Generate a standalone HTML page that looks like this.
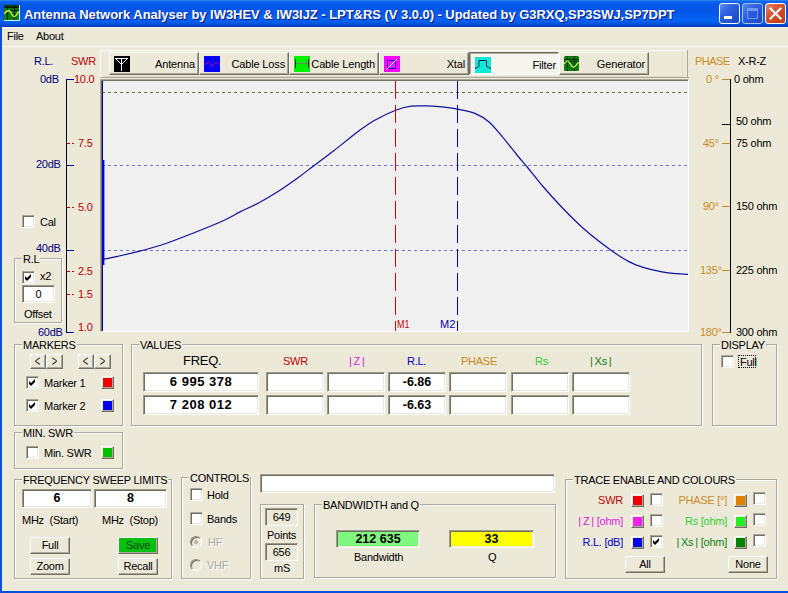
<!DOCTYPE html>
<html><head><meta charset="utf-8"><title>Antenna Network Analyser</title>
<style>
*{box-sizing:border-box;margin:0;padding:0}
html,body{width:788px;height:593px;overflow:hidden;background:#ECE9D8}
body{position:relative;font-family:"Liberation Sans",sans-serif;font-size:11px;color:#000;line-height:1}
.a{position:absolute;white-space:nowrap}
.t{position:absolute;white-space:nowrap;line-height:12px;height:12px;letter-spacing:-0.25px}
#title{left:0;top:0;width:788px;height:27px;background:linear-gradient(to bottom,#3088F2 0px,#1068EE 1.5px,#0558E6 4px,#0355E5 9px,#0458EA 14px,#0663F2 19px,#055EEC 22px,#034FD8 24.5px,#0039BE 27px)}
#ttext{left:24px;top:7px;font-size:13px;font-weight:bold;color:#fff;line-height:16px;text-shadow:1px 1px 0 #0A1883;letter-spacing:-0.045px}
.grp{position:absolute;border:1px solid #ACA899;box-shadow:1px 1px 0 #fff,inset 1px 1px 0 #fff}
.lg{position:absolute;background:#ECE9D8;white-space:nowrap;line-height:12px;height:12px;padding:0 1px;letter-spacing:-0.25px}
.btn{position:absolute;background:#ECE9D8;border:1px solid;border-color:#fff #716F64 #716F64 #fff;box-shadow:inset -1px -1px 0 #ACA899;text-align:center;white-space:nowrap;line-height:12px;letter-spacing:-0.25px}
.cb{position:absolute;width:13px;height:13px;background:#fff;border:1px solid;border-color:#ACA899 #fff #fff #ACA899;box-shadow:inset 1px 1px 0 #716F64,inset -1px -1px 0 #ECE9D8}
.tb{position:absolute;background:#fff;border:1px solid;border-color:#9C9988 #fff #fff #9C9988;box-shadow:inset 1px 1px 0 #716F64,inset -1px -1px 0 #ECE9D8;text-align:center;white-space:nowrap;line-height:12px;letter-spacing:-0.25px}
.sw{position:absolute;width:13px;height:13px;border:1px solid;border-color:#fff #716F64 #716F64 #fff;box-shadow:inset -1px -1px 0 #ACA899,inset 1px 1px 0 #ECE9D8}
.tbtn{position:absolute;top:52px;width:90px;height:23px;border:1px solid;border-color:#fff #716F64 #716F64 #fff;box-shadow:inset -1px -1px 0 #ACA899}
.tbtn.on{border-color:#716F64 #fff #fff #716F64;box-shadow:inset 1px 1px 0 #ACA899;background:#F6F5EE}
</style></head><body>
<div id="title" class="a"></div>
<svg class="a" style="left:4px;top:5px" width="16" height="16" viewBox="0 0 16 16"><rect width="16" height="16" fill="#0B7C0B"/><rect width="16" height="2" fill="#054005"/><path d="M3.500 0V15M10.500 0V15M0 2.500H15M6 5.500H15" stroke="#021802"/><path d="M15.500 0V16M0 15.500H16" stroke="#C8FFF0"/><path d="M0 9C1 7.500 2 6 4.500 5.500C6.500 5.500 7.500 9 8.500 10.500C9.500 12 11.500 11.500 12.500 10S14 7.500 14.500 6.500" fill="none" stroke="#D8FF40" stroke-width="1.300"/></svg>
<div id="ttext" class="a">Antenna Network Analyser by IW3HEV &amp; IW3IJZ - LPT&amp;RS (V 3.0.0) - Updated by G3RXQ,SP3SWJ,SP7DPT</div>
<div class="a" style="left:719px;top:3px;width:21px;height:21px;border:1px solid #fff;border-radius:3px;background:linear-gradient(135deg,#5B8BF0 0%,#2A5FE0 40%,#1F47C0 100%)">
<div class="a" style="left:4px;top:12px;width:8px;height:3px;background:#fff"></div>
</div>
<div class="a" style="left:742px;top:3px;width:21px;height:21px;border:1px solid #A9BEF5;border-radius:3px;background:linear-gradient(135deg,#5B8BF0 0%,#2A5FE0 40%,#1F47C0 100%)">
<div class="a" style="left:4px;top:4px;width:11px;height:11px;border:1px solid #7B9CF0;border-top-width:3px;opacity:.9"></div>
</div>
<div class="a" style="left:765px;top:3px;width:21px;height:21px;border:1px solid #fff;border-radius:3px;background:linear-gradient(135deg,#E9876B 0%,#D6532E 40%,#C03A12 100%)">
<svg class="a" style="left:0;top:0" width="19" height="19" viewBox="0 0 19 19"><path d="M4.500 4.500l10 10M14.500 4.500l-10 10" stroke="#fff" stroke-width="2.200" stroke-linecap="square"/></svg>
</div>
<div class="a" style="left:0px;top:27px;width:788px;height:1px;background:#F6F5EE;"></div>
<div class="a" style="left:0px;top:27px;width:2px;height:566px;background:#0A4FDC;"></div>
<div class="a" style="left:0px;top:591px;width:788px;height:2px;background:#0A4FDC;"></div>
<div class="t" style="left:7px;top:30px;">File</div>
<div class="t" style="left:36px;top:30px;">About</div>
<div class="a" style="left:2px;top:46px;width:786px;height:1px;background:#fff;"></div>
<div class="t" style="left:34px;top:55px;color:#000080;">R.L.</div>
<div class="t" style="left:71px;top:55px;color:#C00000;">SWR</div>
<div class="t" style="left:40px;top:73px;color:#000080;">0dB</div>
<div class="t" style="left:36px;top:158px;color:#000080;">20dB</div>
<div class="t" style="left:36px;top:242px;color:#000080;">40dB</div>
<div class="t" style="left:38px;top:326px;color:#000080;">60dB</div>
<div class="a" style="left:66px;top:79px;width:1px;height:254px;background:#000;"></div>
<div class="a" style="left:66px;top:79px;width:8px;height:1px;background:#000080;"></div>
<div class="a" style="left:66px;top:165px;width:8px;height:1px;background:#000080;"></div>
<div class="a" style="left:66px;top:250px;width:8px;height:1px;background:#000080;"></div>
<div class="a" style="left:66px;top:332px;width:8px;height:1px;background:#000080;"></div>
<div class="t" style="left:74px;top:73px;color:#C00000;">10.0</div>
<div class="a" style="left:67px;top:143px;width:3px;height:1px;background:#C00000"></div><div class="a" style="left:72px;top:143px;width:2px;height:1px;background:#C00000"></div>
<div class="t" style="left:78px;top:137px;color:#C00000;">7.5</div>
<div class="a" style="left:67px;top:207px;width:3px;height:1px;background:#C00000"></div><div class="a" style="left:72px;top:207px;width:2px;height:1px;background:#C00000"></div>
<div class="t" style="left:78px;top:201px;color:#C00000;">5.0</div>
<div class="a" style="left:67px;top:271px;width:3px;height:1px;background:#C00000"></div><div class="a" style="left:72px;top:271px;width:2px;height:1px;background:#C00000"></div>
<div class="t" style="left:78px;top:265px;color:#C00000;">2.5</div>
<div class="a" style="left:67px;top:294px;width:3px;height:1px;background:#C00000"></div><div class="a" style="left:72px;top:294px;width:2px;height:1px;background:#C00000"></div>
<div class="t" style="left:78px;top:288px;color:#C00000;">1.5</div>
<div class="t" style="left:78px;top:321px;color:#C00000;">1.0</div>
<div class="cb" style="left:22px;top:215px"></div>
<div class="t" style="left:40px;top:216px;">Cal</div>
<div class="grp" style="left:14px;top:258px;width:48px;height:65px"></div>
<div class="lg" style="left:22px;top:253px">R.L</div>
<div class="cb" style="left:22px;top:271px"><svg width="13" height="13" viewBox="0 0 13 13" style="position:absolute;left:-1px;top:-1px"><path d="M3 5v3l2 2 4-4V3L5 7z" fill="#000"/></svg></div>
<div class="t" style="left:40px;top:270px;">x2</div>
<div class="tb" style="left:22px;top:285px;width:33px;height:18px;padding-top:2px;">0</div>
<div class="t" style="left:24px;top:308px;">Offset</div>
<div class="a" style="left:100px;top:50px;width:588px;height:1px;background:#fff;"></div>
<div class="a" style="left:100px;top:77px;width:589px;height:1px;background:#ACA899;"></div>
<div class="a" style="left:100px;top:50px;width:1px;height:27px;background:#fff;"></div>
<div class="a" style="left:687px;top:50px;width:1px;height:28px;background:#ACA899;"></div>
<div class="a" style="left:103px;top:76px;width:580px;height:1px;background:#DDD9CA;"></div>
<div class="a" style="left:682px;top:52px;width:1px;height:25px;background:#DDD9CA;"></div>
<div class="tbtn" style="left:109px"></div>
<svg class="a" style="left:114px;top:56px" width="16" height="16" viewBox="0 0 16 16"><rect width="16" height="16" fill="#000"/><path d="M1 2.500H14M1.500 2.500l6 6M13.500 2.500l-6 6M7.500 2V15" stroke="#fff" fill="none"/></svg>
<div class="t" style="left:128px;top:58px;width:67px;text-align:right;letter-spacing:-0.15px">Antenna</div>
<div class="tbtn" style="left:199px"></div>
<svg class="a" style="left:204px;top:56px" width="16" height="16" viewBox="0 0 16 16"><rect width="16" height="16" fill="#0000FF"/><path d="M1 8.500L4.500 6L8 10.500L12.500 6L15 8.500" stroke="#C01070" fill="none"/></svg>
<div class="t" style="left:218px;top:58px;width:67px;text-align:right;letter-spacing:-0.15px">Cable Loss</div>
<div class="tbtn" style="left:289px"></div>
<svg class="a" style="left:294px;top:56px" width="16" height="16" viewBox="0 0 16 16"><rect width="16" height="16" fill="#00F000"/><path d="M1.500 3V12M14.500 3V12" stroke="#002000" fill="none"/><path d="M2 7.500H14M11.500 5.500l2 2l-2 2" stroke="#708070" fill="none"/></svg>
<div class="t" style="left:308px;top:58px;width:67px;text-align:right;letter-spacing:-0.15px">Cable Length</div>
<div class="tbtn" style="left:379px"></div>
<svg class="a" style="left:384px;top:56px" width="16" height="16" viewBox="0 0 16 16"><rect width="16" height="16" fill="#FF00FF"/><rect x="3.500" y="4.500" width="8" height="8" fill="#E020FF" stroke="#3000D0"/><path d="M2.500 13.500L13 3" stroke="#fff"/></svg>
<div class="t" style="left:398px;top:58px;width:67px;text-align:right;letter-spacing:-0.15px">Xtal</div>
<div class="tbtn on" style="left:469px"></div>
<svg class="a" style="left:475px;top:57px" width="16" height="16" viewBox="0 0 16 16"><rect width="16" height="16" fill="#10E8D8"/><path d="M0 11.500L4 9.500V3.500H11.500V9.500L16 11.500" stroke="#002860" fill="none"/></svg>
<div class="t" style="left:489px;top:59px;width:67px;text-align:right;letter-spacing:-0.15px">Filter</div>
<div class="tbtn" style="left:559px"></div>
<svg class="a" style="left:564px;top:56px" width="16" height="16" viewBox="0 0 16 16"><rect width="15" height="15" rx="1.500" fill="#0B7A0B"/><path d="M3.500 0V15M10.500 0V15M0 3.500H15M0 5.500H15" stroke="#023A02"/><path d="M0 8C1.500 6 2.500 4.500 4 5S7 10.500 9 11S12.500 9 14.500 6" fill="none" stroke="#C8FF40" stroke-width="1.200"/></svg>
<div class="t" style="left:578px;top:58px;width:67px;text-align:right;letter-spacing:-0.15px">Generator</div>
<div class="a" style="left:100px;top:79px;width:589px;height:253px;background:#F0F0F0;border-left:1px solid #ACA899;border-top:1px solid #ACA899;border-right:1px solid #fff;border-bottom:1px solid #fff;box-shadow:inset 1px 1px 0 #716F64"></div>
<svg class="a" style="left:100px;top:79px" width="590" height="253" viewBox="0 0 590 253">
<path d="M2 13.500H588" stroke="#707038" stroke-dasharray="3 3" fill="none"/>
<path d="M2 86.500H588M2 171.500H588" stroke="#7474D4" stroke-dasharray="3 3" fill="none"/>
<path d="M2.500 2V252" stroke="#000090" fill="none"/>
<path d="M3.200 81V186" stroke="#0000E0" stroke-width="2.400" fill="none"/>
<path d="M2.0 180.6 C4.6 180.1 12.2 178.5 17.8 177.3 C23.4 176.1 28.1 175.1 35.5 173.2 C42.9 171.3 52.4 168.9 62.2 165.7 C72.0 162.4 83.7 157.8 94.1 153.7 C104.5 149.6 116.7 144.7 124.3 141.2 C132.0 137.7 134.3 135.8 140.0 132.9 C145.7 130.0 152.0 127.5 158.5 124.0 C165.0 120.5 172.1 116.3 178.8 112.0 C185.6 107.7 193.2 102.2 199.0 98.0 C204.8 93.8 207.8 91.3 213.6 86.9 C219.4 82.5 226.5 77.3 233.8 71.7 C241.1 66.0 250.8 58.0 257.5 53.0 C264.2 48.0 267.9 45.0 274.3 41.4 C280.7 37.8 289.4 33.6 295.6 31.2 C301.8 28.8 306.5 27.9 311.4 27.2 C316.3 26.5 319.9 26.8 325.0 26.9 C330.1 27.0 336.4 27.4 341.8 27.9 C347.2 28.5 352.0 29.1 357.6 30.2 C363.2 31.3 370.3 32.5 375.5 34.6 C380.7 36.7 384.6 39.2 389.0 43.0 C393.4 46.8 397.3 51.9 402.0 57.4 C406.7 62.9 412.7 70.7 417.0 76.0 C421.3 81.3 423.7 83.8 428.0 89.0 C432.3 94.2 437.4 101.0 443.0 107.5 C448.6 114.0 454.8 120.9 461.6 128.0 C468.4 135.1 475.9 142.9 484.0 150.0 C492.1 157.1 502.6 165.1 510.0 170.5 C517.4 175.9 522.9 179.4 528.4 182.4 C533.9 185.4 537.4 186.7 543.0 188.4 C548.6 190.1 556.4 191.8 562.0 192.8 C567.6 193.9 572.4 194.3 576.7 194.7 C581.0 195.1 586.1 195.3 588.0 195.4" stroke="#1010A0" stroke-width="1.200" fill="none"/>
<path d="M295.500 2V252" stroke="#D00000" stroke-dasharray="18 6" fill="none"/>
<path d="M357.500 2V252" stroke="#0000B0" stroke-dasharray="18 6" fill="none"/>
<text x="297" y="249" font-size="11" textLength="12.500" lengthAdjust="spacingAndGlyphs" fill="#D00000" font-family="Liberation Sans, sans-serif">M1</text>
<text x="340" y="249" font-size="11" fill="#0000B0" font-family="Liberation Sans, sans-serif">M2</text>
</svg>
<div class="t" style="left:695px;top:55px;color:#CC8A1E;letter-spacing:-0.55px">PHASE</div>
<div class="t" style="left:738px;top:55px;">X-R-Z</div>
<div class="a" style="left:730px;top:79px;width:1px;height:254px;background:#000;"></div>
<div class="t" style="left:706px;top:73px;color:#CC8A1E;">0 °</div>
<div class="a" style="left:722px;top:79px;width:8px;height:1px;background:#CC8A1E;"></div>
<div class="t" style="left:703px;top:137px;color:#CC8A1E;">45°</div>
<div class="a" style="left:722px;top:143px;width:8px;height:1px;background:#CC8A1E;"></div>
<div class="t" style="left:703px;top:200px;color:#CC8A1E;">90°</div>
<div class="a" style="left:722px;top:206px;width:8px;height:1px;background:#CC8A1E;"></div>
<div class="t" style="left:700px;top:264px;color:#CC8A1E;">135°</div>
<div class="a" style="left:722px;top:270px;width:8px;height:1px;background:#CC8A1E;"></div>
<div class="t" style="left:700px;top:326px;color:#CC8A1E;">180°</div>
<div class="a" style="left:722px;top:332px;width:8px;height:1px;background:#CC8A1E;"></div>
<div class="t" style="left:734px;top:73px;">0 ohm</div>
<div class="t" style="left:736px;top:115px;">50 ohm</div>
<div class="a" style="left:722px;top:124px;width:8px;height:1px;background:#000;"></div>
<div class="t" style="left:736px;top:137px;">75 ohm</div>
<div class="t" style="left:736px;top:200px;">150 ohm</div>
<div class="t" style="left:736px;top:264px;">225 ohm</div>
<div class="t" style="left:736px;top:326px;">300 ohm</div>
<div class="grp" style="left:14px;top:344px;width:109px;height:82px"></div>
<div class="lg" style="left:22px;top:339px">MARKERS</div>
<div class="btn" style="left:30px;top:354px;width:16px;height:15px;padding-top:0px;font-size:12px;line-height:11px;letter-spacing:0;color:#222"><span style="display:inline-block;transform:translateY(1.500px) scale(.78,1.250)">&lt;</span></div>
<div class="btn" style="left:46px;top:354px;width:17px;height:15px;padding-top:0px;font-size:12px;line-height:11px;letter-spacing:0;color:#222"><span style="display:inline-block;transform:translateY(1.500px) scale(.78,1.250)">&gt;</span></div>
<div class="btn" style="left:78px;top:354px;width:16px;height:15px;padding-top:0px;font-size:12px;line-height:11px;letter-spacing:0;color:#222"><span style="display:inline-block;transform:translateY(1.500px) scale(.78,1.250)">&lt;</span></div>
<div class="btn" style="left:94px;top:354px;width:17px;height:15px;padding-top:0px;font-size:12px;line-height:11px;letter-spacing:0;color:#222"><span style="display:inline-block;transform:translateY(1.500px) scale(.78,1.250)">&gt;</span></div>
<div class="cb" style="left:26px;top:376px"><svg width="13" height="13" viewBox="0 0 13 13" style="position:absolute;left:-1px;top:-1px"><path d="M3 5v3l2 2 4-4V3L5 7z" fill="#000"/></svg></div>
<div class="t" style="left:44px;top:377px;">Marker 1</div>
<div class="sw" style="left:101px;top:376px;background:#F00000"></div>
<div class="cb" style="left:26px;top:399px"><svg width="13" height="13" viewBox="0 0 13 13" style="position:absolute;left:-1px;top:-1px"><path d="M3 5v3l2 2 4-4V3L5 7z" fill="#000"/></svg></div>
<div class="t" style="left:44px;top:400px;">Marker 2</div>
<div class="sw" style="left:101px;top:399px;background:#0000F0"></div>
<div class="grp" style="left:14px;top:432px;width:109px;height:37px"></div>
<div class="lg" style="left:22px;top:427px">MIN. SWR</div>
<div class="cb" style="left:26px;top:446px"></div>
<div class="t" style="left:44px;top:447px;">Min. SWR</div>
<div class="sw" style="left:101px;top:446px;background:#00C000"></div>
<div class="grp" style="left:131px;top:344px;width:571px;height:82px"></div>
<div class="lg" style="left:139px;top:339px">VALUES</div>
<div class="t" style="left:183px;top:355px;font-size:13px">FREQ.</div>
<div class="t" style="left:283px;top:355px;color:#C00000;">SWR</div>
<div class="t" style="left:349px;top:355px;color:#E020E0;">|&thinsp;Z&thinsp;|</div>
<div class="t" style="left:407px;top:355px;color:#0000C0;">R.L.</div>
<div class="t" style="left:461px;top:355px;color:#CC8A1E;">PHASE</div>
<div class="t" style="left:535px;top:355px;color:#30D030;">Rs</div>
<div class="t" style="left:590px;top:355px;color:#108010;">|&thinsp;Xs&thinsp;|</div>
<div class="tb" style="left:143px;top:372px;width:116px;height:20px;padding-top:3px;font-weight:bold;font-size:13px;letter-spacing:0.5px">6 995 378</div>
<div class="tb" style="left:266px;top:372px;width:58px;height:20px;padding-top:3px;font-weight:bold;font-size:12.500px;letter-spacing:0"></div>
<div class="tb" style="left:327px;top:372px;width:58px;height:20px;padding-top:3px;font-weight:bold;font-size:12.500px;letter-spacing:0"></div>
<div class="tb" style="left:388px;top:372px;width:58px;height:20px;padding-top:3px;font-weight:bold;font-size:12.500px;letter-spacing:0">-6.86</div>
<div class="tb" style="left:449px;top:372px;width:58px;height:20px;padding-top:3px;font-weight:bold;font-size:12.500px;letter-spacing:0"></div>
<div class="tb" style="left:511px;top:372px;width:58px;height:20px;padding-top:3px;font-weight:bold;font-size:12.500px;letter-spacing:0"></div>
<div class="tb" style="left:572px;top:372px;width:58px;height:20px;padding-top:3px;font-weight:bold;font-size:12.500px;letter-spacing:0"></div>
<div class="tb" style="left:143px;top:395px;width:116px;height:20px;padding-top:3px;font-weight:bold;font-size:13px;letter-spacing:0.5px">7 208 012</div>
<div class="tb" style="left:266px;top:395px;width:58px;height:20px;padding-top:3px;font-weight:bold;font-size:12.500px;letter-spacing:0"></div>
<div class="tb" style="left:327px;top:395px;width:58px;height:20px;padding-top:3px;font-weight:bold;font-size:12.500px;letter-spacing:0"></div>
<div class="tb" style="left:388px;top:395px;width:58px;height:20px;padding-top:3px;font-weight:bold;font-size:12.500px;letter-spacing:0">-6.63</div>
<div class="tb" style="left:449px;top:395px;width:58px;height:20px;padding-top:3px;font-weight:bold;font-size:12.500px;letter-spacing:0"></div>
<div class="tb" style="left:511px;top:395px;width:58px;height:20px;padding-top:3px;font-weight:bold;font-size:12.500px;letter-spacing:0"></div>
<div class="tb" style="left:572px;top:395px;width:58px;height:20px;padding-top:3px;font-weight:bold;font-size:12.500px;letter-spacing:0"></div>
<div class="grp" style="left:712px;top:344px;width:65px;height:82px"></div>
<div class="lg" style="left:720px;top:339px">DISPLAY</div>
<div class="cb" style="left:721px;top:355px"></div>
<div class="t" style="left:740px;top:356px;">Full</div>
<div class="a" style="left:738px;top:355px;width:18px;height:13px;border:1px dotted #000"></div>
<div class="grp" style="left:14px;top:479px;width:158px;height:100px"></div>
<div class="lg" style="left:22px;top:474px">FREQUENCY SWEEP LIMITS</div>
<div class="tb" style="left:22px;top:489px;width:70px;height:19px;padding-top:2px;font-weight:bold;font-size:12.500px;letter-spacing:0">6</div>
<div class="tb" style="left:94px;top:489px;width:73px;height:19px;padding-top:2px;font-weight:bold;font-size:12.500px;letter-spacing:0">8</div>
<div class="t" style="left:22px;top:514px;">MHz&nbsp; (Start)</div>
<div class="t" style="left:102px;top:514px;">MHz&nbsp; (Stop)</div>
<div class="btn" style="left:30px;top:537px;width:40px;height:17px;padding-top:1px;">Full</div>
<div class="btn" style="left:118px;top:537px;width:40px;height:17px;padding-top:1px;background:#08C010;color:#064806">Save</div>
<div class="btn" style="left:30px;top:558px;width:40px;height:17px;padding-top:1px;">Zoom</div>
<div class="btn" style="left:118px;top:558px;width:40px;height:17px;padding-top:1px;">Recall</div>
<div class="grp" style="left:181px;top:477px;width:70px;height:102px"></div>
<div class="lg" style="left:189px;top:472px">CONTROLS</div>
<div class="cb" style="left:190px;top:488px"></div>
<div class="t" style="left:207px;top:489px;">Hold</div>
<div class="cb" style="left:190px;top:512px"></div>
<div class="t" style="left:207px;top:513px;">Bands</div>
<div class="a" style="left:190px;top:536px;width:12px;height:12px;border-radius:50%;border:1px solid;border-color:#8C897A #fff #fff #8C897A;box-shadow:inset 1px 1px 0 #716F64;background:#ECE9D8"><div class="a" style="left:3px;top:3px;width:4px;height:4px;border-radius:50%;background:#B5B2A2"></div></div>
<div class="t" style="left:208px;top:536px;color:#ACA899;text-shadow:1px 1px 0 #fff">HF</div>
<div class="a" style="left:190px;top:559px;width:12px;height:12px;border-radius:50%;border:1px solid;border-color:#8C897A #fff #fff #8C897A;box-shadow:inset 1px 1px 0 #716F64;background:#ECE9D8"></div>
<div class="t" style="left:207px;top:559px;color:#ACA899;text-shadow:1px 1px 0 #fff">VHF</div>
<div class="tb" style="left:260px;top:474px;width:295px;height:19px;padding-top:2px;"></div>
<div class="grp" style="left:260px;top:504px;width:44px;height:75px"></div>
<div class="tb" style="left:265px;top:508px;width:33px;height:18px;padding-top:2px;background:#ECE9D8">649</div>
<div class="t" style="left:267px;top:529px;">Points</div>
<div class="tb" style="left:265px;top:543px;width:33px;height:18px;padding-top:2px;background:#ECE9D8">656</div>
<div class="t" style="left:274px;top:562px;">mS</div>
<div class="grp" style="left:314px;top:504px;width:242px;height:74px"></div>
<div class="lg" style="left:322px;top:499px">BANDWIDTH and Q</div>
<div class="tb" style="left:336px;top:530px;width:84px;height:18px;padding-top:2px;background:#80F880;font-weight:bold;font-size:12.500px;letter-spacing:0">212 635</div>
<div class="t" style="left:354px;top:551px;">Bandwidth</div>
<div class="tb" style="left:449px;top:530px;width:85px;height:18px;padding-top:2px;background:#FFFF00;font-weight:bold;font-size:12.500px;letter-spacing:0">33</div>
<div class="t" style="left:488px;top:551px;">Q</div>
<div class="grp" style="left:565px;top:479px;width:212px;height:100px"></div>
<div class="lg" style="left:573px;top:474px">TRACE ENABLE AND COLOURS</div>
<div class="t" style="left:563px;top:494px;width:60px;text-align:right;color:#C00000">SWR</div>
<div class="sw" style="left:631px;top:494px;background:#F00000"></div>
<div class="cb" style="left:650px;top:493px"></div>
<div class="t" style="left:659px;top:494px;width:68px;text-align:right;color:#CC8A1E">PHASE [°]</div>
<div class="sw" style="left:734px;top:494px;background:#E08000"></div>
<div class="cb" style="left:753px;top:492px"></div>
<div class="t" style="left:563px;top:515px;width:60px;text-align:right;color:#E020E0">|&thinsp;Z&thinsp;| [ohm]</div>
<div class="sw" style="left:631px;top:515px;background:#F020F0"></div>
<div class="cb" style="left:650px;top:514px"></div>
<div class="t" style="left:659px;top:515px;width:68px;text-align:right;color:#30D030">Rs [ohm]</div>
<div class="sw" style="left:734px;top:515px;background:#20F020"></div>
<div class="cb" style="left:753px;top:513px"></div>
<div class="t" style="left:563px;top:536px;width:60px;text-align:right;color:#0000C0">R.L. [dB]</div>
<div class="sw" style="left:631px;top:536px;background:#0000F0"></div>
<div class="cb" style="left:650px;top:535px"><svg width="13" height="13" viewBox="0 0 13 13" style="position:absolute;left:-1px;top:-1px"><path d="M3 5v3l2 2 4-4V3L5 7z" fill="#000"/></svg></div>
<div class="t" style="left:659px;top:536px;width:68px;text-align:right;color:#108010">|&thinsp;Xs&thinsp;| [ohm]</div>
<div class="sw" style="left:734px;top:536px;background:#008000"></div>
<div class="cb" style="left:753px;top:534px"></div>
<div class="btn" style="left:625px;top:556px;width:40px;height:17px;padding-top:1px;">All</div>
<div class="btn" style="left:728px;top:556px;width:40px;height:17px;padding-top:1px;">None</div>
</body></html>
